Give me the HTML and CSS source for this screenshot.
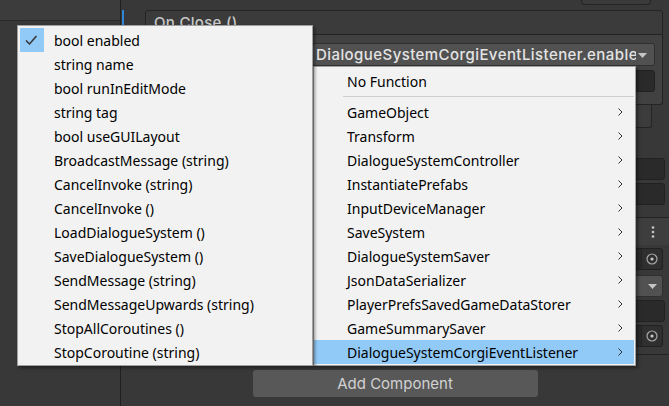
FILE: index.html
```html
<!DOCTYPE html>
<html>
<head>
<meta charset="utf-8">
<link rel="stylesheet" href="styles.css">
</head>
<body>
<div class="app">
  <aside class="hier"><div class="hier-bar"></div></aside>
  <main class="insp">
    <div class="top-row"><div class="top-btn"></div></div>
    <div class="event-wrap">
      <div class="sel-bar"></div>
      <section class="event">
        <div class="event-head">On Close ()</div>
        <div class="event-body">
          <div class="ev-row">
            <div class="dd dd-runtime"><span class="dd-text">Runtime Only</span></div>
            <div class="dd dd-func">
              <span class="dd-text">DialogueSystemCorgiEventListener.enabled</span>
              <svg class="caret" width="9" height="5" viewBox="0 0 9 5"><path d="M0 0H9L4.5 5Z" fill="#c4c4c4"/></svg>
            </div>
          </div>
          <div class="ev-row2"><div class="input"></div></div>
        </div>
        <div class="event-foot"><div class="plusminus"></div></div>
      </section>
    </div>
    <div class="fields">
      <div class="input"></div>
      <div class="input"></div>
    </div>
    <section class="comp">
      <div class="comp-head">
        <svg class="kebab" width="4" height="12" viewBox="0 0 4 12"><circle cx="2" cy="1.5" r="1.3" fill="#c8c8c8"/><circle cx="2" cy="6" r="1.3" fill="#c8c8c8"/><circle cx="2" cy="10.5" r="1.3" fill="#c8c8c8"/></svg>
      </div>
      <div class="comp-rows">
        <div class="objfield"><span class="picker"><svg width="12" height="12" viewBox="0 0 12 12"><circle cx="6" cy="6" r="5" fill="none" stroke="#a8a8a8" stroke-width="1.2"/><circle cx="6" cy="6" r="1.6" fill="#c8c8c8"/></svg></span></div>
        <div class="dd dd-row"><svg class="caret" width="9" height="5" viewBox="0 0 9 5"><path d="M0 0H9L4.5 5Z" fill="#c4c4c4"/></svg></div>
        <div class="input in-row"></div>
        <div class="objfield"><span class="picker"><svg width="12" height="12" viewBox="0 0 12 12"><circle cx="6" cy="6" r="5" fill="none" stroke="#a8a8a8" stroke-width="1.2"/><circle cx="6" cy="6" r="1.6" fill="#c8c8c8"/></svg></span></div>
      </div>
    </section>
    <div class="add-row"><button class="add-btn">Add Component</button></div>
  </main>
</div>

<div class="menu menu-sub">
  <div class="mitem"><span class="mlabel">No Function</span></div>
  <div class="sep"></div>
  <div class="mitem"><span class="mlabel">GameObject</span><svg class="chev" width="5" height="8" viewBox="0 0 5 8"><path d="M0.5 0.5L4 4L0.5 7.5" fill="none" stroke="#333" stroke-width="1"/></svg></div>
  <div class="mitem"><span class="mlabel">Transform</span><svg class="chev" width="5" height="8" viewBox="0 0 5 8"><path d="M0.5 0.5L4 4L0.5 7.5" fill="none" stroke="#333" stroke-width="1"/></svg></div>
  <div class="mitem"><span class="mlabel">DialogueSystemController</span><svg class="chev" width="5" height="8" viewBox="0 0 5 8"><path d="M0.5 0.5L4 4L0.5 7.5" fill="none" stroke="#333" stroke-width="1"/></svg></div>
  <div class="mitem"><span class="mlabel">InstantiatePrefabs</span><svg class="chev" width="5" height="8" viewBox="0 0 5 8"><path d="M0.5 0.5L4 4L0.5 7.5" fill="none" stroke="#333" stroke-width="1"/></svg></div>
  <div class="mitem"><span class="mlabel">InputDeviceManager</span><svg class="chev" width="5" height="8" viewBox="0 0 5 8"><path d="M0.5 0.5L4 4L0.5 7.5" fill="none" stroke="#333" stroke-width="1"/></svg></div>
  <div class="mitem"><span class="mlabel">SaveSystem</span><svg class="chev" width="5" height="8" viewBox="0 0 5 8"><path d="M0.5 0.5L4 4L0.5 7.5" fill="none" stroke="#333" stroke-width="1"/></svg></div>
  <div class="mitem"><span class="mlabel">DialogueSystemSaver</span><svg class="chev" width="5" height="8" viewBox="0 0 5 8"><path d="M0.5 0.5L4 4L0.5 7.5" fill="none" stroke="#333" stroke-width="1"/></svg></div>
  <div class="mitem"><span class="mlabel">JsonDataSerializer</span><svg class="chev" width="5" height="8" viewBox="0 0 5 8"><path d="M0.5 0.5L4 4L0.5 7.5" fill="none" stroke="#333" stroke-width="1"/></svg></div>
  <div class="mitem"><span class="mlabel">PlayerPrefsSavedGameDataStorer</span><svg class="chev" width="5" height="8" viewBox="0 0 5 8"><path d="M0.5 0.5L4 4L0.5 7.5" fill="none" stroke="#333" stroke-width="1"/></svg></div>
  <div class="mitem"><span class="mlabel">GameSummarySaver</span><svg class="chev" width="5" height="8" viewBox="0 0 5 8"><path d="M0.5 0.5L4 4L0.5 7.5" fill="none" stroke="#333" stroke-width="1"/></svg></div>
  <div class="mitem hl"><span class="mlabel">DialogueSystemCorgiEventListener</span><svg class="chev" width="5" height="8" viewBox="0 0 5 8"><path d="M0.5 0.5L4 4L0.5 7.5" fill="none" stroke="#333" stroke-width="1"/></svg></div>
</div>

<div class="menu menu-main">
  <div class="mitem"><span class="check on"><svg width="24" height="24" viewBox="0 0 24 24"><path d="M6 12.5L9.5 16L16.5 8" fill="none" stroke="#333" stroke-width="1.5"/></svg></span><span class="mlabel">bool enabled</span></div>
  <div class="mitem"><span class="check"></span><span class="mlabel">string name</span></div>
  <div class="mitem"><span class="check"></span><span class="mlabel">bool runInEditMode</span></div>
  <div class="mitem"><span class="check"></span><span class="mlabel">string tag</span></div>
  <div class="mitem"><span class="check"></span><span class="mlabel">bool useGUILayout</span></div>
  <div class="mitem"><span class="check"></span><span class="mlabel">BroadcastMessage (string)</span></div>
  <div class="mitem"><span class="check"></span><span class="mlabel">CancelInvoke (string)</span></div>
  <div class="mitem"><span class="check"></span><span class="mlabel">CancelInvoke ()</span></div>
  <div class="mitem"><span class="check"></span><span class="mlabel">LoadDialogueSystem ()</span></div>
  <div class="mitem"><span class="check"></span><span class="mlabel">SaveDialogueSystem ()</span></div>
  <div class="mitem"><span class="check"></span><span class="mlabel">SendMessage (string)</span></div>
  <div class="mitem"><span class="check"></span><span class="mlabel">SendMessageUpwards (string)</span></div>
  <div class="mitem"><span class="check"></span><span class="mlabel">StopAllCoroutines ()</span></div>
  <div class="mitem"><span class="check"></span><span class="mlabel">StopCoroutine (string)</span></div>
</div>
</body>
</html>
```

FILE: styles.css
```css
html, body {
  margin: 0;
  padding: 0;
}
body {
  width: 669px;
  height: 406px;
  overflow: hidden;
  position: relative;
  background: #383838;
  font-family: Inter, "Noto Sans", sans-serif;
}
.app {
  display: flex;
  height: 406px;
}
.hier {
  width: 120px;
  flex: none;
  border-right: 1px solid #202020;
}
.hier-bar {
  height: 20px;
  background: #3c3c3c;
  border-bottom: 1px solid #2a2a2a;
}
.insp {
  flex: 1;
  min-width: 0;
  display: flex;
  flex-direction: column;
}
.top-row {
  height: 10px;
  display: flex;
  justify-content: flex-end;
}
.top-btn {
  width: 68px;
  height: 4px;
  margin-right: 18px;
  border: 1px solid #242424;
  border-top: none;
  border-radius: 0 0 4px 4px;
  background: #3a3a3a;
}
.event-wrap {
  display: flex;
}
.sel-bar {
  width: 2px;
  margin-left: 1px;
  background: #2f84d6;
  flex: none;
}
.event {
  flex: 1;
  min-width: 0;
  margin-left: 21px;
  margin-right: 6px;
  display: flex;
  flex-direction: column;
}
.event-head {
  height: 23px;
  border: 1px solid #242424;
  border-radius: 3px 3px 0 0;
  background: #3b3b3b;
  color: #c8c8c8;
  font-size: 15px;
  font-weight: 500;
  letter-spacing: 0.3px;
  line-height: 23px;
  padding-left: 8px;
}
.event-body {
  background: #414141;
  border: 1px solid #242424;
  border-top: none;
  border-radius: 0 0 3px 3px;
  padding: 8px 7px 12px 9px;
}
.ev-row {
  display: flex;
  gap: 7px;
  height: 23px;
}
.dd {
  box-sizing: border-box;
  background: #515151;
  border: 1px solid #303030;
  border-radius: 3px;
  display: flex;
  align-items: center;
  color: #e4e4e4;
  font-size: 15px;
  font-weight: 500;
  letter-spacing: 0.43px;
}
.dd-runtime {
  width: 150px;
  flex: none;
  padding-left: 4px;
}
.dd-func {
  flex: 1;
  min-width: 0;
  padding: 0 7px 0 3px;
}
.dd-text {
  flex: 1;
  min-width: 0;
  overflow: hidden;
  white-space: nowrap;
}
.caret {
  flex: none;
  margin-left: 2px;
  margin-top: 1px;
}
.ev-row2 {
  margin-top: 4px;
  height: 22px;
  display: flex;
  padding-left: 157px;
}
.ev-row2 .input {
  flex: 1;
}
.event-foot {
  display: flex;
  justify-content: flex-end;
}
.plusminus {
  width: 52px;
  height: 22px;
  margin-right: 11px;
  border: 1px solid #242424;
  border-top: none;
  border-radius: 0 0 3px 3px;
  background: #3c3c3c;
}
.input {
  box-sizing: border-box;
  height: 22px;
  background: #2a2a2a;
  border: 1px solid #212121;
  border-radius: 3px;
}
.fields {
  margin: 30px 4px 0 200px;
  display: flex;
  flex-direction: column;
  gap: 3px;
}
.comp {
  margin-top: 12px;
  border-top: 1px solid #232323;
  border-bottom: 1px solid #232323;
  padding-bottom: 7px;
}
.comp-head {
  height: 27px;
  background: #3e3e3e;
  display: flex;
  justify-content: flex-end;
  align-items: center;
  padding-right: 14px;
}
.comp-rows {
  padding: 3px 6px 0 200px;
  display: flex;
  flex-direction: column;
  gap: 3px;
}
.objfield {
  box-sizing: border-box;
  height: 22px;
  background: #2a2a2a;
  border: 1px solid #212121;
  border-radius: 3px;
  display: flex;
  justify-content: flex-end;
}
.picker {
  width: 20px;
  display: flex;
  align-items: center;
  justify-content: center;
  background: #2f2f2f;
  border-left: 1px solid #242424;
  border-radius: 0 3px 3px 0;
}
.dd-row {
  height: 22px;
  margin-top: 2px;
  justify-content: flex-end;
  padding-right: 5px;
}
.in-row {
  margin-right: -2px;
}
.add-row {
  display: flex;
  justify-content: center;
  margin-top: 15px;
}
.add-btn {
  width: 285px;
  height: 27px;
  background: #585858;
  border: none;
  border-radius: 3px;
  color: #d2d2d2;
  font-family: Inter, "Noto Sans", sans-serif;
  font-size: 15px;
  padding: 0;
}

/* popup menus */
.menu {
  position: absolute;
  box-sizing: border-box;
  background: #f2f2f2;
  border: 1px solid #a0a0a0;
  box-shadow: 2px 2px 3px rgba(0, 0, 0, 0.4);
  font-family: "Noto Sans", sans-serif;
  font-size: 14px;
  color: #000;
}
.menu-main {
  left: 17px;
  top: 25px;
  width: 296px;
  height: 341px;
  padding: 2px 0 1px 2px;
  z-index: 2;
}
.menu-sub {
  left: 313px;
  top: 66px;
  width: 323px;
  height: 300px;
  padding: 2px 0 1px 0;
  z-index: 1;
}
.mitem {
  height: 24px;
  display: flex;
  align-items: center;
  white-space: nowrap;
}
.menu-sub .mitem {
  padding-left: 33px;
  margin-right: 1px;
}
.mitem.hl {
  background: #91c9f7;
}
.check {
  width: 24px;
  height: 24px;
  margin-right: 10px;
  flex: none;
}
.check.on {
  background: #91c9f7;
}
.check svg {
  display: block;
}
.chev {
  margin-left: auto;
  margin-right: 11px;
  flex: none;
}
.sep {
  height: 1px;
  margin: 3px 1px 3px 29px;
  background: #cfcfcf;
}
```
